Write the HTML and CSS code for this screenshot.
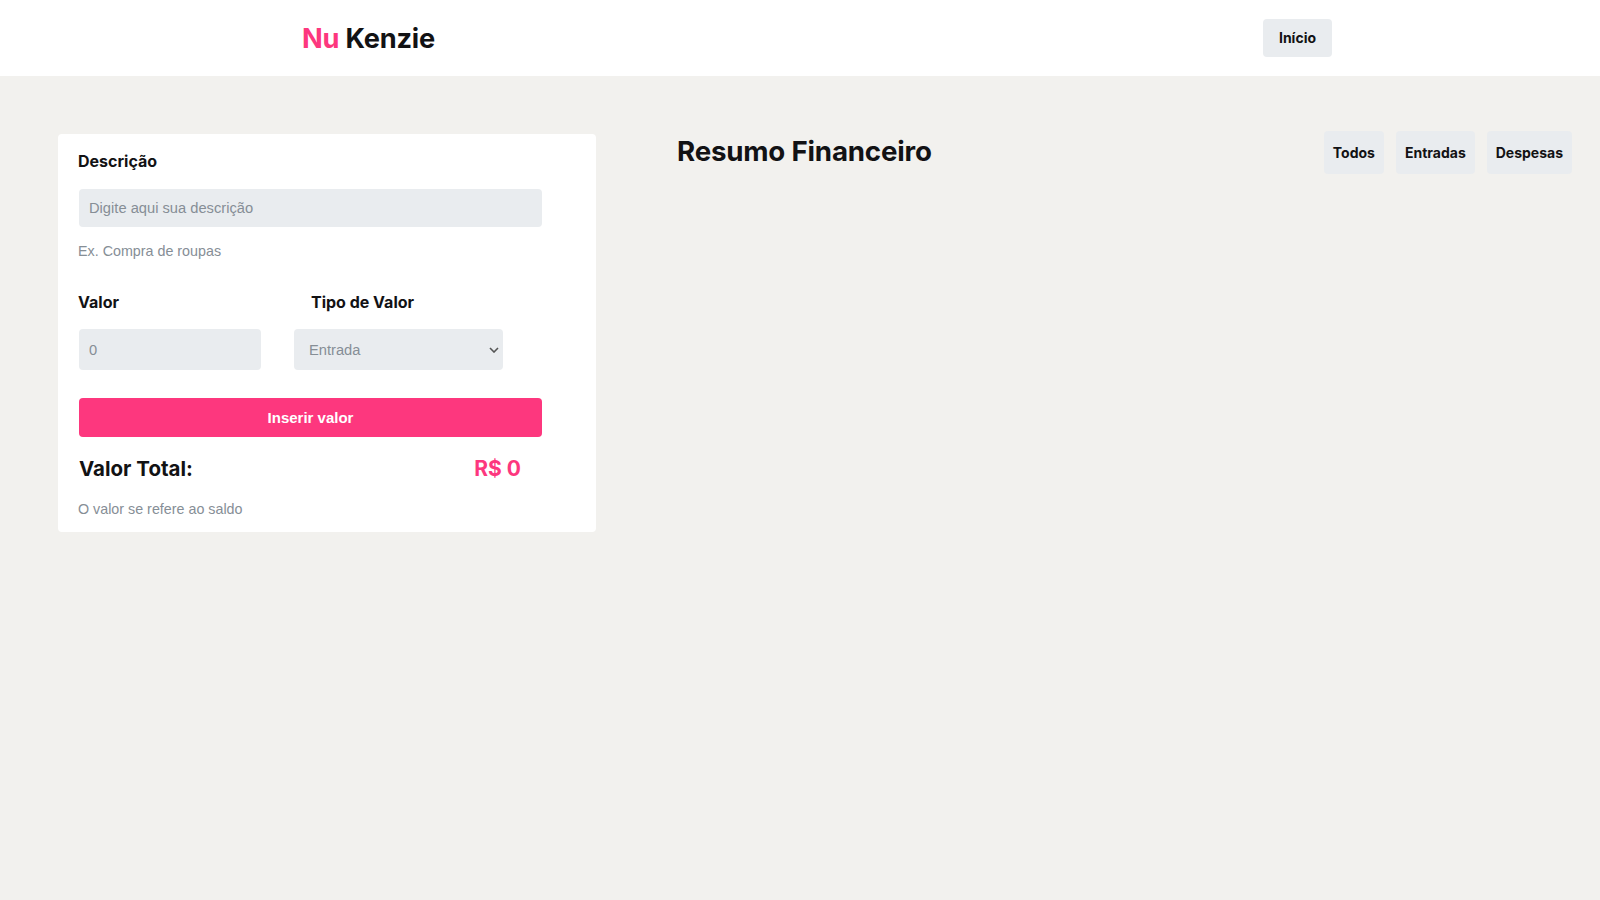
FILE: index.html
```html
<!DOCTYPE html>
<html lang="pt-BR">
<head>
<meta charset="utf-8">
<title>Nu Kenzie</title>
<link rel="stylesheet" href="styles.css">
</head>
<body>
<header class="header">
  <h1 class="logo"><span class="logo-nu">Nu</span> Kenzie</h1>
  <button class="btn-home">Início</button>
</header>
<main class="main">
  <form class="card">
    <label class="label label-desc">Descrição</label>
    <input class="field field-desc" type="text" placeholder="Digite aqui sua descrição">
    <p class="hint hint-ex">Ex. Compra de roupas</p>
    <div class="row">
      <div class="col col-valor">
        <label class="label">Valor</label>
        <input class="field field-valor" type="text" placeholder="0">
      </div>
      <div class="col col-tipo">
        <label class="label label-tipo">Tipo de Valor</label>
        <div class="select-wrap">
          <select class="field field-select">
            <option>Entrada</option>
            <option>Despesa</option>
          </select>
          <svg class="chevron" width="10" height="6" viewBox="0 0 10 6"><path d="M1 1l4 4 4-4" fill="none" stroke="#555" stroke-width="1.6"/></svg>
        </div>
      </div>
    </div>
    <button type="button" class="btn-insert">Inserir valor</button>
    <div class="total">
      <span class="total-label">Valor Total:</span>
      <span class="total-value">R$ 0</span>
    </div>
    <p class="hint hint-total">O valor se refere ao saldo</p>
  </form>
  <section class="summary">
    <h2 class="summary-title">Resumo Financeiro</h2>
    <div class="filters">
      <button class="filter">Todos</button>
      <button class="filter">Entradas</button>
      <button class="filter">Despesas</button>
    </div>
  </section>
</main>
</body>
</html>
```
FILE: styles.css
```css
* { box-sizing: border-box; }
html, body { margin: 0; padding: 0; }
body {
  background: #f2f1ee;
  font-family: Inter, "Liberation Sans", sans-serif;
  color: #111;
  min-height: 900px;
}
.header {
  height: 76px;
  background: #fff;
  display: flex;
  align-items: center;
  justify-content: space-between;
  padding: 0 268px 0 302px;
}
.logo {
  margin: 0;
  font-size: 27.2px;
  font-weight: 700;
  color: #121214;
  letter-spacing: -0.2px;
}
.logo-nu { color: #fd377e; }
.btn-home {
  height: 38px;
  width: 69px;
  border: none;
  border-radius: 4px;
  background: #e9ecef;
  font-family: Inter, sans-serif;
  font-weight: 700;
  font-size: 14px;
  color: #121214;
  padding: 0 0 2px;
}
.main {
  display: flex;
  align-items: flex-start;
  padding: 55px 28px 0 58px;
}
.card {
  width: 538px;
  background: #fff;
  border-radius: 4px;
  padding: 16px 54px 14px 21px;
  margin-top: 3px;
  display: flex;
  flex-direction: column;
}
.label {
  display: block;
  font-size: 16px;
  font-weight: 700;
  line-height: 22px;
  color: #121214;
}
.label-desc, .col-valor .label { margin-left: -1px; }
.field {
  border: none;
  border-radius: 4px;
  background: #e9ecef;
  font-family: "Liberation Sans", Arial, sans-serif;
  font-size: 14.7px;
  color: #868e96;
  outline: none;
}
.field::placeholder { color: #868e96; }
.field-desc {
  margin-top: 17px;
  height: 38px;
  width: 463px;
  padding: 0 10px;
}
.hint {
  margin: 0;
  font-family: "Liberation Sans", Arial, sans-serif;
  font-size: 14.3px;
  line-height: 17px;
  color: #868e96;
}
.hint-ex { margin-top: 16px; margin-left: -1px; }
.row {
  display: flex;
  gap: 33px;
  margin-top: 31px;
}
.col { display: flex; flex-direction: column; gap: 16px; }
.label-tipo { padding-left: 17px; }
.field-valor {
  width: 182px;
  height: 41px;
  padding: 0 10px;
}
.select-wrap { position: relative; width: 209px; }
.field-select {
  -webkit-appearance: none;
  appearance: none;
  width: 209px;
  height: 41px;
  padding: 0 15px;
}
.chevron {
  position: absolute;
  right: 4px;
  top: 18px;
  pointer-events: none;
}
.btn-insert {
  margin-top: 28px;
  width: 463px;
  height: 39px;
  border: none;
  border-radius: 4px;
  background: #fd377e;
  color: #fff;
  font-family: "Liberation Sans", Arial, sans-serif;
  font-weight: 700;
  font-size: 15px;
}
.total {
  display: flex;
  justify-content: space-between;
  align-items: center;
  width: 463px;
  padding-right: 21px;
  margin-top: 18px;
  line-height: 27px;
}
.total-label { font-size: 20.5px; font-weight: 700; color: #121214; }
.total-value { font-size: 21px; font-weight: 700; color: #fd377e; }
.hint-total { margin-top: 19px; margin-left: -1px; }
.summary {
  flex: 1;
  margin-left: 81px;
  display: flex;
  justify-content: space-between;
  align-items: center;
}
.summary-title {
  margin: 0 0 4px;
  font-size: 27.7px;
  font-weight: 700;
  color: #121214;
  letter-spacing: -0.2px;
}
.filters { display: flex; gap: 12px; }
.filter {
  height: 43px;
  padding: 0 9px;
  border: none;
  border-radius: 4px;
  background: #e9ecef;
  font-family: Inter, sans-serif;
  font-weight: 700;
  font-size: 14px;
  color: #121214;
}
```
